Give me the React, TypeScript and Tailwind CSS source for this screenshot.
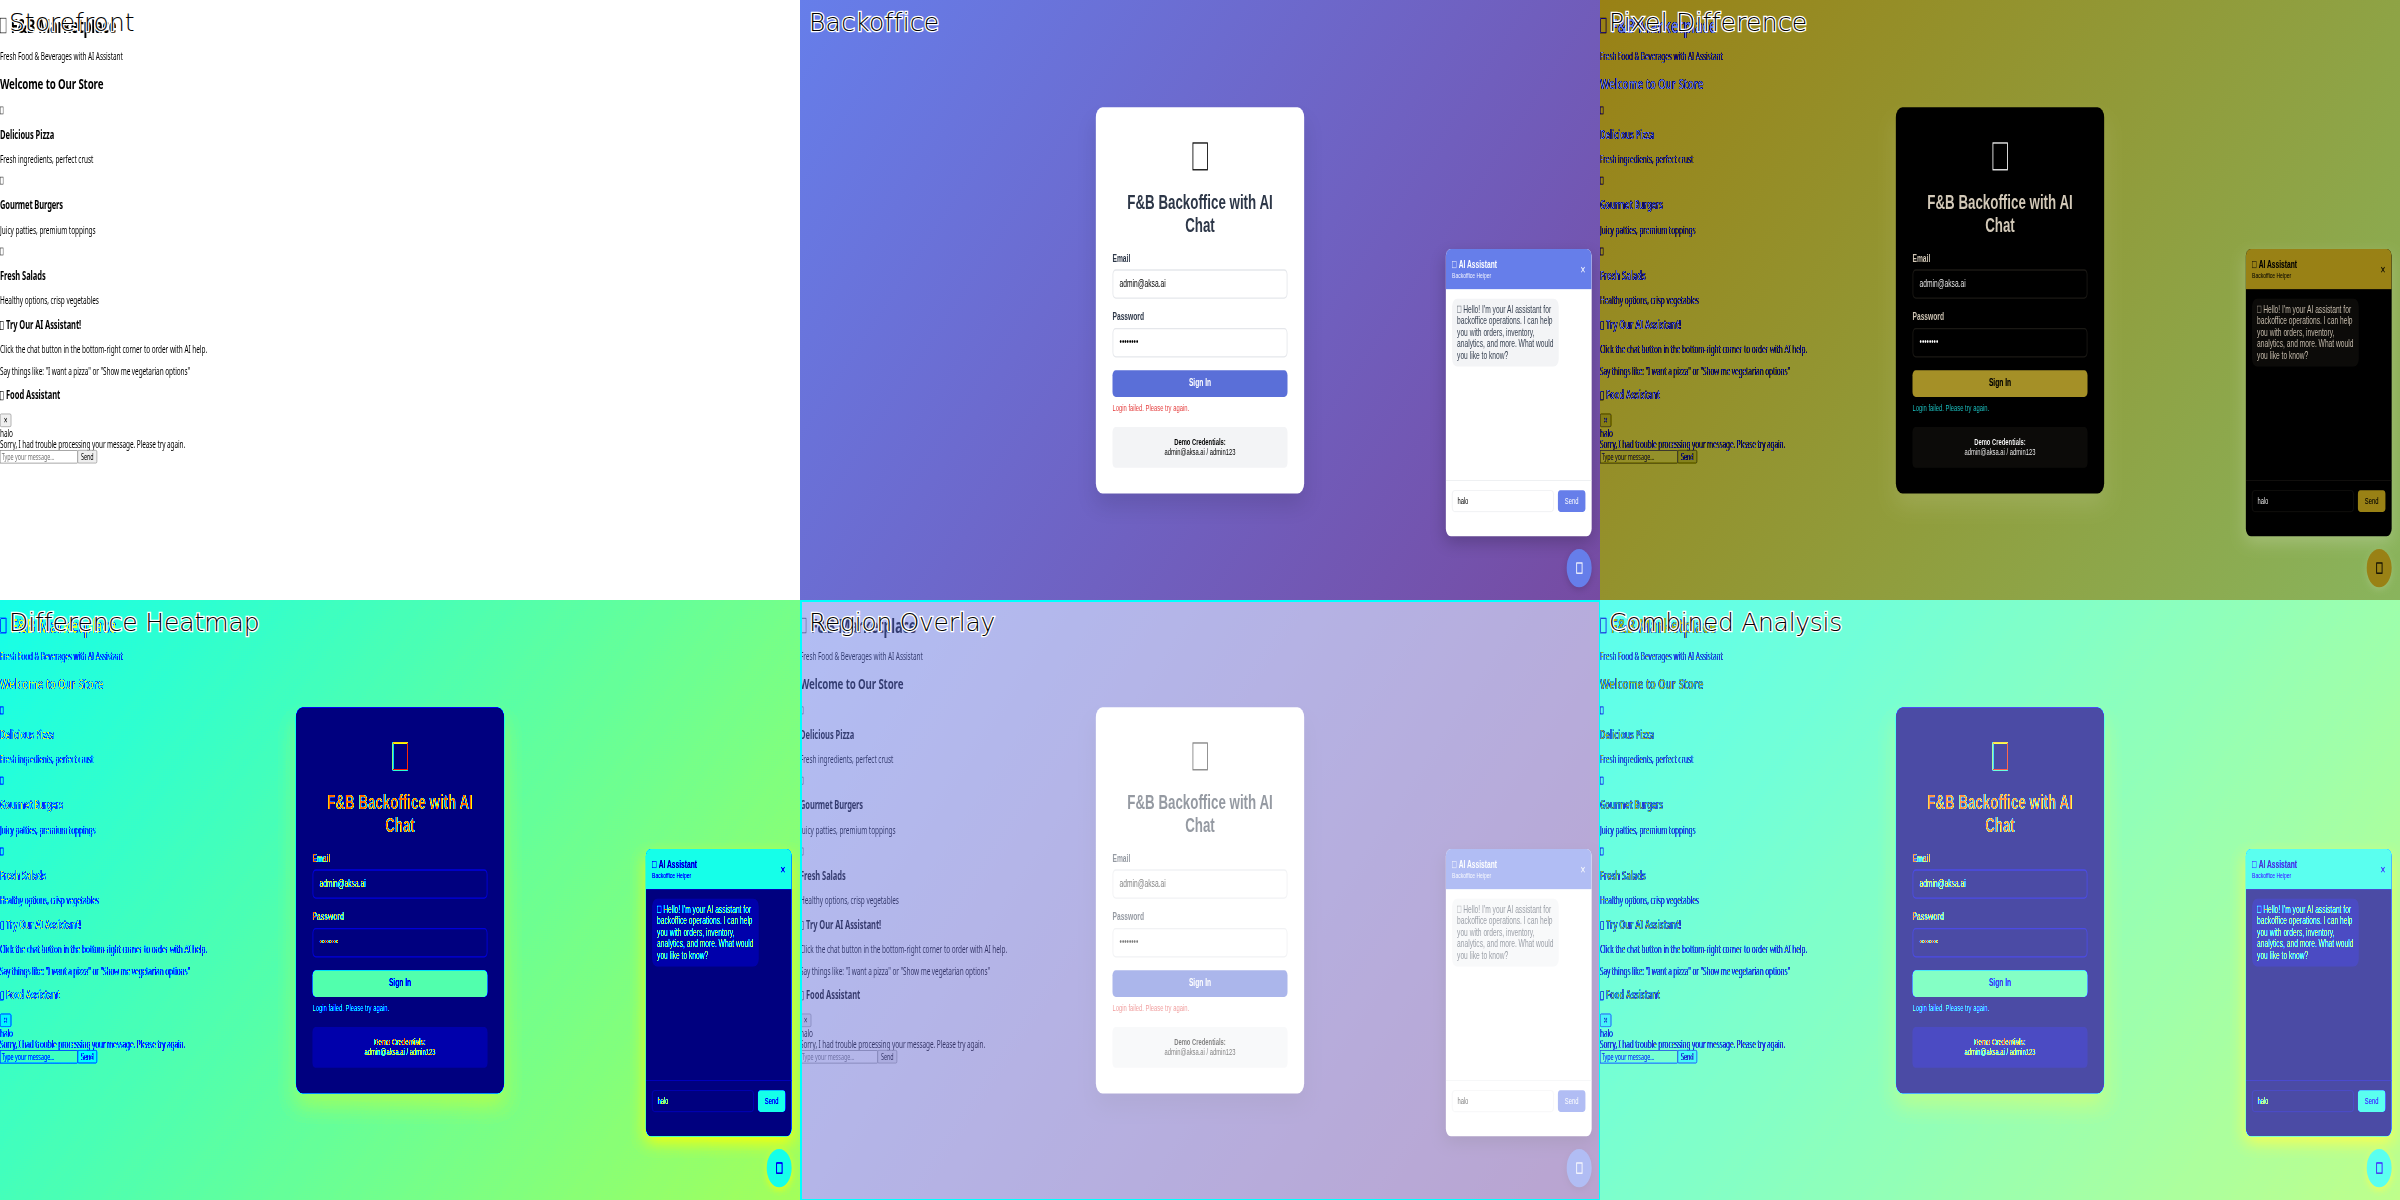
import type { ReactNode } from 'react'

/** Empty rectangle drawn where an emoji has no glyph. */
function Box({ className }: { className: string }) {
  return <span className={`inline-block shrink-0 ${className}`} />
}

function Storefront() {
  const p = 'my-4 h-[18px] text-[15.5px] leading-[18px]'
  const h3 = 'my-[18.72px] h-[21px] text-[18.1px] leading-[21px] font-bold'
  const icon = 'flex h-[18px] items-end pb-[3px]'
  const iconBox = 'h-[12px] w-[8px] border border-[#333333]'
  const headBox = 'mr-[6px] mb-[2px] h-[14px] w-[8.5px] border border-black align-bottom'
  return (
    <div className="flow-root h-full w-full whitespace-nowrap bg-white font-['Noto_Sans',sans-serif] text-black">
      <h1 className="mt-[22px] mb-[21.4px] flex h-[36px] items-center text-[31px] leading-[36px] font-bold tracking-[-0.7px]">
        <Box className="mr-[11px] h-[24px] w-[14.5px] border-[1.5px] border-black" />
        F&amp;B Marketplace
      </h1>
      <p className={`${p} tracking-[-0.125px]`}>Fresh Food &amp; Beverages with AI Assistant</p>
      <h2 className="my-[19.7px] h-[27px] text-[23.3px] leading-[27px] font-bold tracking-[-0.32px]">Welcome to Our Store</h2>
      <div className={icon}><Box className={iconBox} /></div>
      <h3 className={`${h3} tracking-[-0.11px]`}>Delicious Pizza</h3>
      <p className={`${p} tracking-[-0.1px]`}>Fresh ingredients, perfect crust</p>
      <div className={icon}><Box className={iconBox} /></div>
      <h3 className={`${h3} tracking-[-0.35px]`}>Gourmet Burgers</h3>
      <p className={`${p} tracking-[-0.03px]`}>Juicy patties, premium toppings</p>
      <div className={icon}><Box className={iconBox} /></div>
      <h3 className={`${h3} tracking-[-0.17px]`}>Fresh Salads</h3>
      <p className={`${p} tracking-[-0.11px]`}>Healthy options, crisp vegetables</p>
      <h3 className={`${h3} tracking-[-0.2px]`}><Box className={headBox} />Try Our AI Assistant!</h3>
      <p className={`${p} tracking-[-0.09px]`}>Click the chat button in the bottom-right corner to order with AI help.</p>
      <p className={`${p} tracking-[-0.17px]`}>Say things like: "I want a pizza" or "Show me vegetarian options"</p>
      <h3 className={`${h3} tracking-[-0.15px]`}><Box className={headBox} />Food Assistant</h3>
      <div className="flex h-[21px]">
        <button className="flex h-[21.5px] w-[27px] items-center justify-center rounded-[3px] border-[1.5px] border-[#767676] bg-[#efefef] text-[16px] leading-none">×</button>
      </div>
      <div className="h-[18px] text-[15.5px] leading-[18px] tracking-[-0.15px]">halo</div>
      <div className="h-[18px] text-[15.5px] leading-[18px] tracking-[-0.21px]">Sorry, I had trouble processing your message. Please try again.</div>
      <div className="flex h-[21.5px]">
        <div className="flex w-[186px] items-center border-[1.5px] border-[#767676] bg-white pl-[3px] text-[13px] leading-none tracking-[-0.1px] text-[#757575]">Type your message...</div>
        <button className="flex w-[47px] items-center justify-center rounded-[3px] border-[1.5px] border-[#767676] bg-[#efefef] text-[13px] leading-none">Send</button>
      </div>
    </div>
  )
}

function Field({ label, value }: { label: string; value: string }) {
  return (
    <div className="mb-5">
      <div className="mb-2 h-[18px] leading-[18px] font-bold text-[#2d3748]">{label}</div>
      <div className="flex h-[46px] items-center rounded-lg border-2 border-[#e5e7eb] px-[15px] pb-px leading-[18px]">{value}</div>
    </div>
  )
}

function ChatWindow() {
  return (
    <div className="absolute right-[20px] bottom-[100px] flex h-[450px] w-[350px] flex-col overflow-hidden rounded-xl bg-white shadow-[0_10px_30px_rgba(0,0,0,0.2)]">
      <div className="flex h-[63px] shrink-0 items-center justify-between bg-[#667eea] px-[15px] text-white">
        <div>
          <div className="flex h-[18px] items-center leading-[18px] font-bold">
            <Box className="mr-[5px] h-[10.5px] w-[11px] border border-white/80" />
            AI Assistant
          </div>
          <div className="text-[12px] leading-[14px] opacity-90">Backoffice Helper</div>
        </div>
        <span className="text-[20px] leading-[18px]">×</span>
      </div>
      <div className="h-[299px] p-[15px]">
        <div className="w-[256px] rounded-xl bg-[#f3f4f6] px-3 pt-[7.5px] pb-[8.5px] leading-[18px] whitespace-nowrap text-[#374151]">
          <Box className="mr-[5px] h-[11px] w-[9.5px] border border-[#374151]/70" />
          Hello! I'm your AI assistant for<br />
          backoffice operations. I can help<br />
          you with orders, inventory,<br />
          analytics, and more. What would<br />
          you like to know?
        </div>
      </div>
      <div className="flex gap-[10px] border-t-[1.5px] border-[#e5e7eb] p-[15px] text-[14px]">
        <div className="flex h-[34px] flex-1 items-center rounded-md border border-[#e5e7eb] px-3 tracking-[-0.2px]">halo</div>
        <button className="h-[34px] w-[66px] rounded-md bg-[#667eea] text-white">Send</button>
      </div>
    </div>
  )
}

function Backoffice() {
  return (
    <div className="relative flex h-full w-full items-center justify-center bg-[linear-gradient(135deg,#667eea_0%,#764ba2_100%)] font-['Liberation_Sans',Arial,sans-serif] text-[16px] text-black">
      <div className="h-[605px] w-[500px] rounded-2xl bg-white p-10 shadow-[0_20px_40px_rgba(0,0,0,0.1)]">
        <div className="mb-[16px] flex h-[74px] justify-center pt-[15px]">
          <Box className="h-[44.5px] w-[37px] border-2 border-black" />
        </div>
        <h1 className="mb-6 text-center text-[32px] leading-[37px] font-bold text-[#2d3748]">F&amp;B Backoffice with AI Chat</h1>
        <Field label="Email" value="admin@aksa.ai" />
        <Field label="Password" value="••••••••" />
        <button className="block h-[42px] w-full rounded-lg bg-[#5a6fd8] pb-px leading-[18px] font-bold text-white">Sign In</button>
        <div className="mt-[9px] text-[14px] leading-[16px] text-[#e53e3e]">Login failed. Please try again.</div>
        <div className="mt-[22px] rounded-lg bg-[#f3f4f6] pt-[15.5px] pb-[16.5px] text-center text-[14px] leading-[16px]">
          <b>Demo Credentials:</b><br />admin@aksa.ai / admin123
        </div>
      </div>
      <ChatWindow />
      <div className="absolute right-[20px] bottom-[20px] flex size-[60px] items-center justify-center rounded-full bg-[#667eea] shadow-[0_4px_12px_rgba(0,0,0,0.15)]">
        <Box className="h-[17.5px] w-[15px] border-2 border-white" />
      </div>
    </div>
  )
}

/** A 1920×940 page squeezed into one 800×600 panel. */
function Layer({ className = '', children }: { className?: string; children: ReactNode }) {
  return (
    <div className={`col-start-1 row-start-1 h-[600px] w-[800px] overflow-hidden ${className}`}>
      <div className="h-[940px] w-[1920px] origin-top-left [transform:scale(0.416667,0.638298)]">{children}</div>
    </div>
  )
}

function Difference({ className = '' }: { className?: string }) {
  return (
    <div className={`isolate col-start-1 row-start-1 grid h-[600px] w-[800px] ${className}`}>
      <Layer><Storefront /></Layer>
      <Layer className="mix-blend-difference"><Backoffice /></Layer>
    </div>
  )
}

function Panel({ label, tracking = '', children }: { label: string; tracking?: string; children: ReactNode }) {
  return (
    <section className="relative grid h-[600px] w-[800px] overflow-hidden">
      {children}
      <h2 className={`absolute top-[8px] left-[9px] z-10 font-['DejaVu_Sans',sans-serif] text-[25px] leading-[30px] font-extralight whitespace-nowrap text-black [-webkit-text-stroke:2.5px_#fff] [font-variant-ligatures:none] [paint-order:stroke_fill] ${tracking}`}>
        {label}
      </h2>
    </section>
  )
}

/** Averages the channels and maps the result through the jet palette. */
function JetFilter() {
  return (
    <svg className="absolute size-0" aria-hidden="true">
      <filter id="jet" x="0" y="0" width="100%" height="100%" colorInterpolationFilters="sRGB">
        <feColorMatrix
          type="matrix"
          values="0.3333 0.3333 0.3333 0 0  0.3333 0.3333 0.3333 0 0  0.3333 0.3333 0.3333 0 0  0 0 0 1 0"
        />
        <feComponentTransfer>
          <feFuncR type="table" tableValues="0 0 0 0 0.5 1 1 1 0.5" />
          <feFuncG type="table" tableValues="0 0 0.5 1 1 1 0.5 0 0" />
          <feFuncB type="table" tableValues="0.5 1 1 1 0.5 0 0 0 0" />
        </feComponentTransfer>
      </filter>
    </svg>
  )
}

export default function App() {
  return (
    <main className="grid h-[1200px] w-[2400px] grid-cols-3 grid-rows-2 overflow-hidden">
      <JetFilter />
      <Panel label="Storefront">
        <Layer><Storefront /></Layer>
      </Panel>
      <Panel label="Backoffice" tracking="tracking-[0.25px]">
        <Layer><Backoffice /></Layer>
      </Panel>
      <Panel label="Pixel Difference" tracking="tracking-[0.2px]">
        <Difference />
      </Panel>
      <Panel label="Difference Heatmap" tracking="tracking-[-0.08px]">
        <Difference className="[filter:url(#jet)]" />
      </Panel>
      <Panel label="Region Overlay" tracking="tracking-[-0.28px]">
        <Layer><Storefront /></Layer>
        <Layer className="opacity-50"><Backoffice /></Layer>
        <div className="z-[1] col-start-1 row-start-1 border-t-2 border-r border-b border-l-2 border-[#00ffff]" />
      </Panel>
      <Panel label="Combined Analysis" tracking="tracking-[-0.3px]">
        <Layer><Storefront /></Layer>
        <div className="col-start-1 row-start-1 opacity-70">
          <Difference className="[filter:url(#jet)]" />
        </div>
      </Panel>
    </main>
  )
}
